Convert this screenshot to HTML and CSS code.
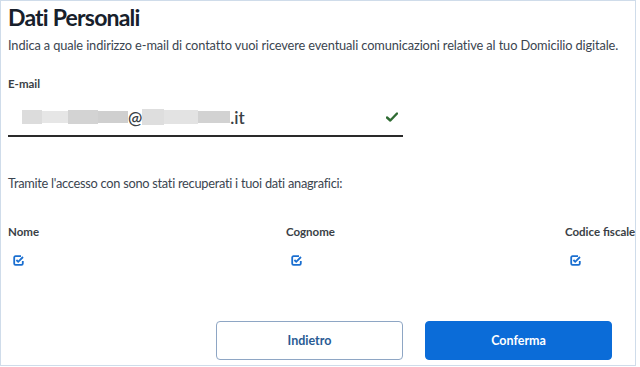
FILE: index.html
```html
<!DOCTYPE html>
<html lang="it">
<head>
<meta charset="utf-8">
<title>Dati Personali</title>
<link rel="stylesheet" href="styles.css">
</head>
<body>
<div class="frame">
  <h1 class="title">Dati Personali</h1>
  <p class="desc">Indica a quale indirizzo e-mail di contatto vuoi ricevere eventuali comunicazioni relative al tuo Domicilio digitale.</p>

  <div class="field">
    <label class="field-label">E-mail</label>
    <div class="input">
      <span class="value">
        <span class="blur b1"></span><span class="blur b2"></span><span class="blur b3"></span><span class="blur b4"></span>@<span class="blur b5"></span><span class="blur b6"></span><span class="blur b7"></span>.it
      </span>
      <svg class="valid" width="12" height="10" viewBox="0 0 12 10"><path d="M1 5.5 L4.3 8.5 L11 1.5" fill="none" stroke="#2f6b33" stroke-width="2.4" stroke-linecap="round" stroke-linejoin="round"/></svg>
    </div>
  </div>

  <p class="info">Tramite l'accesso con sono stati recuperati i tuoi dati anagrafici:</p>

  <div class="data">
    <div class="col">
      <span class="col-label">Nome</span>
      <svg class="chk" width="11" height="11" viewBox="0 0 11 11"><path d="M8 1.2 H2.5 A1.3 1.3 0 0 0 1.2 2.5 V8.5 A1.3 1.3 0 0 0 2.5 9.8 H8.5 A1.3 1.3 0 0 0 9.8 8.5 V6" fill="none" stroke="#1b6fd0" stroke-width="1.8"/><path d="M3.4 5 L5.2 6.8 L10 2" fill="none" stroke="#1b6fd0" stroke-width="1.8"/></svg>
    </div>
    <div class="col">
      <span class="col-label">Cognome</span>
      <svg class="chk" width="11" height="11" viewBox="0 0 11 11"><path d="M8 1.2 H2.5 A1.3 1.3 0 0 0 1.2 2.5 V8.5 A1.3 1.3 0 0 0 2.5 9.8 H8.5 A1.3 1.3 0 0 0 9.8 8.5 V6" fill="none" stroke="#1b6fd0" stroke-width="1.8"/><path d="M3.4 5 L5.2 6.8 L10 2" fill="none" stroke="#1b6fd0" stroke-width="1.8"/></svg>
    </div>
    <div class="col">
      <span class="col-label">Codice fiscale</span>
      <svg class="chk" width="11" height="11" viewBox="0 0 11 11"><path d="M8 1.2 H2.5 A1.3 1.3 0 0 0 1.2 2.5 V8.5 A1.3 1.3 0 0 0 2.5 9.8 H8.5 A1.3 1.3 0 0 0 9.8 8.5 V6" fill="none" stroke="#1b6fd0" stroke-width="1.8"/><path d="M3.4 5 L5.2 6.8 L10 2" fill="none" stroke="#1b6fd0" stroke-width="1.8"/></svg>
    </div>
  </div>

  <div class="actions">
    <button class="btn btn-outline">Indietro</button>
    <button class="btn btn-primary">Conferma</button>
  </div>
</div>
</body>
</html>
```
FILE: styles.css
```css
html, body {
  margin: 0;
  padding: 0;
  background: #ffffff;
}
body {
  font-family: "Lato", "Open Sans", sans-serif;
  color: #1a1a1a;
}
.frame {
  box-sizing: border-box;
  width: 636px;
  height: 366px;
  border: 1px solid #cfdcea;
  padding: 0 2px 0 7px;
  display: flex;
  flex-direction: column;
}
.title {
  margin: 1px 0 0;
  font-size: 23px;
  letter-spacing: -0.8px;
  line-height: 30px;
  font-weight: 700;
  color: #17202b;
}
.desc {
  margin: 4px 0 0;
  font-size: 12.8px;
  letter-spacing: -0.12px;
  line-height: 18px;
  color: #3b4550;
  white-space: nowrap;
}
.field {
  margin-top: 23px;
}
.field-label {
  display: block;
  font-size: 11.5px;
  line-height: 14px;
  font-weight: 700;
  color: #3a3f46;
}
.input {
  width: 395px;
  height: 38px;
  margin-top: 8px;
  box-sizing: border-box;
  border-bottom: 2px solid #2a2a2a;
  display: flex;
  align-items: center;
  justify-content: space-between;
  padding: 0 5px 0 14px;
}
.value {
  font-size: 17px;
  font-weight: 600;
  color: #3a3f46;
  display: flex;
  align-items: center;
}
.blur {
  display: inline-block;
  height: 14px;
  background: #d9d9d9;
}
.b1 { width: 20px; background: #dcdcdc; }
.b2 { width: 26px; background: #e6e6e6; height: 12px; }
.b3 { width: 30px; background: #d3d3d3; }
.b4 { width: 30px; background: #cfcfcf; height: 12px; }
.b5 { width: 22px; background: #dedede; height: 16px; }
.b6 { width: 34px; background: #e3e3e3; }
.b7 { width: 32px; background: #d2d2d2; height: 12px; }
.valid {
  display: block;
}
.info {
  margin: 37px 0 0;
  font-size: 12.8px;
  letter-spacing: -0.27px;
  line-height: 18px;
  color: #3b4550;
}
.data {
  margin-top: 33px;
  display: grid;
  grid-template-columns: 278px 279px auto;
}
.col {
  display: flex;
  flex-direction: column;
  align-items: flex-start;
}
.col-label {
  font-size: 11.5px;
  line-height: 14px;
  font-weight: 700;
  color: #3a3f46;
  white-space: nowrap;
}
.chk {
  display: block;
  margin: 16px 0 0 5px;
}
.actions {
  margin-top: auto;
  margin-bottom: 5px;
  display: flex;
  justify-content: flex-end;
  gap: 22px;
  padding-right: 21px;
}
.btn {
  width: 187px;
  height: 39px;
  box-sizing: border-box;
  border-radius: 4px;
  font-family: "Lato", "Open Sans", sans-serif;
  font-size: 12.5px;
  font-weight: 700;
  cursor: pointer;
}
.btn-outline {
  background: #ffffff;
  border: 1px solid #8ea6c4;
  color: #2a5b94;
}
.btn-primary {
  background: #0b6cd8;
  border: 1px solid #0b6cd8;
  color: #ffffff;
}
```
